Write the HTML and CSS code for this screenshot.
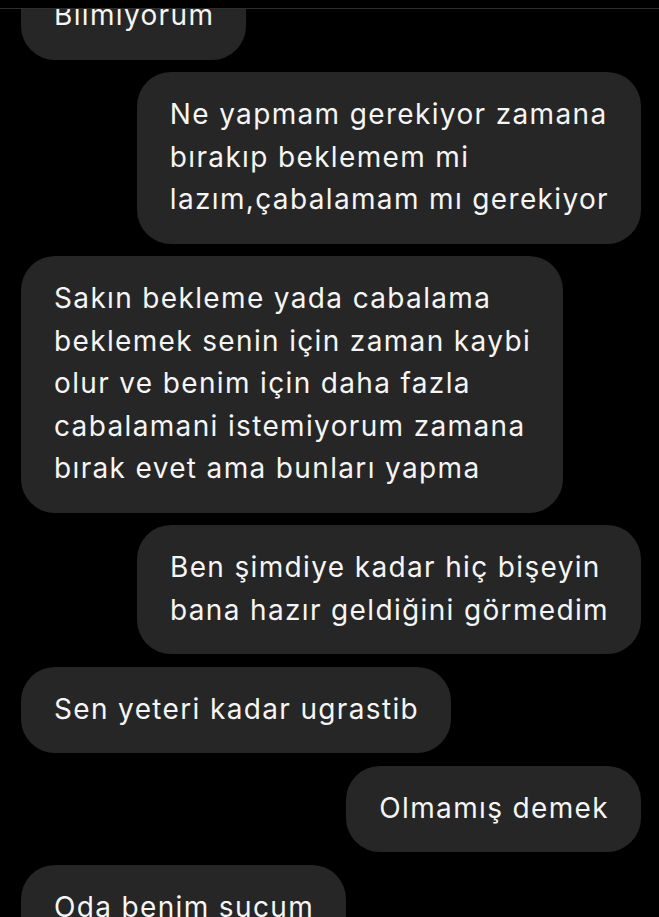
FILE: index.html
```html
<!DOCTYPE html>
<html lang="tr">
<head>
    <meta charset="UTF-8">
    <meta name="viewport" content="width=device-width, initial-scale=1.0">
    <title>Mesajlar</title>
    <link rel="stylesheet" href="styles.css">
</head>
<body>
    <div class="topbar"></div>
    <div class="thread">
        <ul class="messages">
            <li class="msg in">Bilmiyorum</li>
            <li class="msg out">Ne yapmam gerekiyor zamana<br>bırakıp beklemem mi<br>lazım,çabalamam mı gerekiyor</li>
            <li class="msg in">Sakın bekleme yada cabalama<br>beklemek senin için zaman kaybi<br>olur ve benim için daha fazla<br>cabalamani istemiyorum zamana<br>bırak evet ama bunları yapma</li>
            <li class="msg out">Ben şimdiye kadar hiç bişeyin<br>bana hazır geldiğini görmedim</li>
            <li class="msg in">Sen yeteri kadar ugrastib</li>
            <li class="msg out">Olmamış demek</li>
            <li class="msg in">Oda benim sucum</li>
        </ul>
    </div>
</body>
</html>
```

FILE: styles.css
```css
* {
    box-sizing: border-box;
}
html, body {
    height: 100%;
}
body {
    margin: 0;
    background-color: #000;
    color: #f5f5f5;
    font-family: Inter, "Noto Sans", sans-serif;
    display: flex;
    flex-direction: column;
    overflow: hidden;
}
.topbar {
    height: 9px;
    flex-shrink: 0;
    border-bottom: 1px solid #2e2e2e;
}
.thread {
    flex: 1;
    overflow: hidden;
}
.messages {
    list-style: none;
    margin: -36px 0 0;
    padding: 0 18px 0 21px;
    display: flex;
    flex-direction: column;
    gap: 12.5px;
}
.msg {
    background-color: #262626;
    border-radius: 34px;
    padding: 21px 32px 23px 33px;
    font-size: 28px;
    letter-spacing: 1.35px;
    line-height: 42.5px;
    white-space: nowrap;
    width: fit-content;
}
.msg.in {
    align-self: flex-start;
}
.msg.out {
    align-self: flex-end;
}
```
